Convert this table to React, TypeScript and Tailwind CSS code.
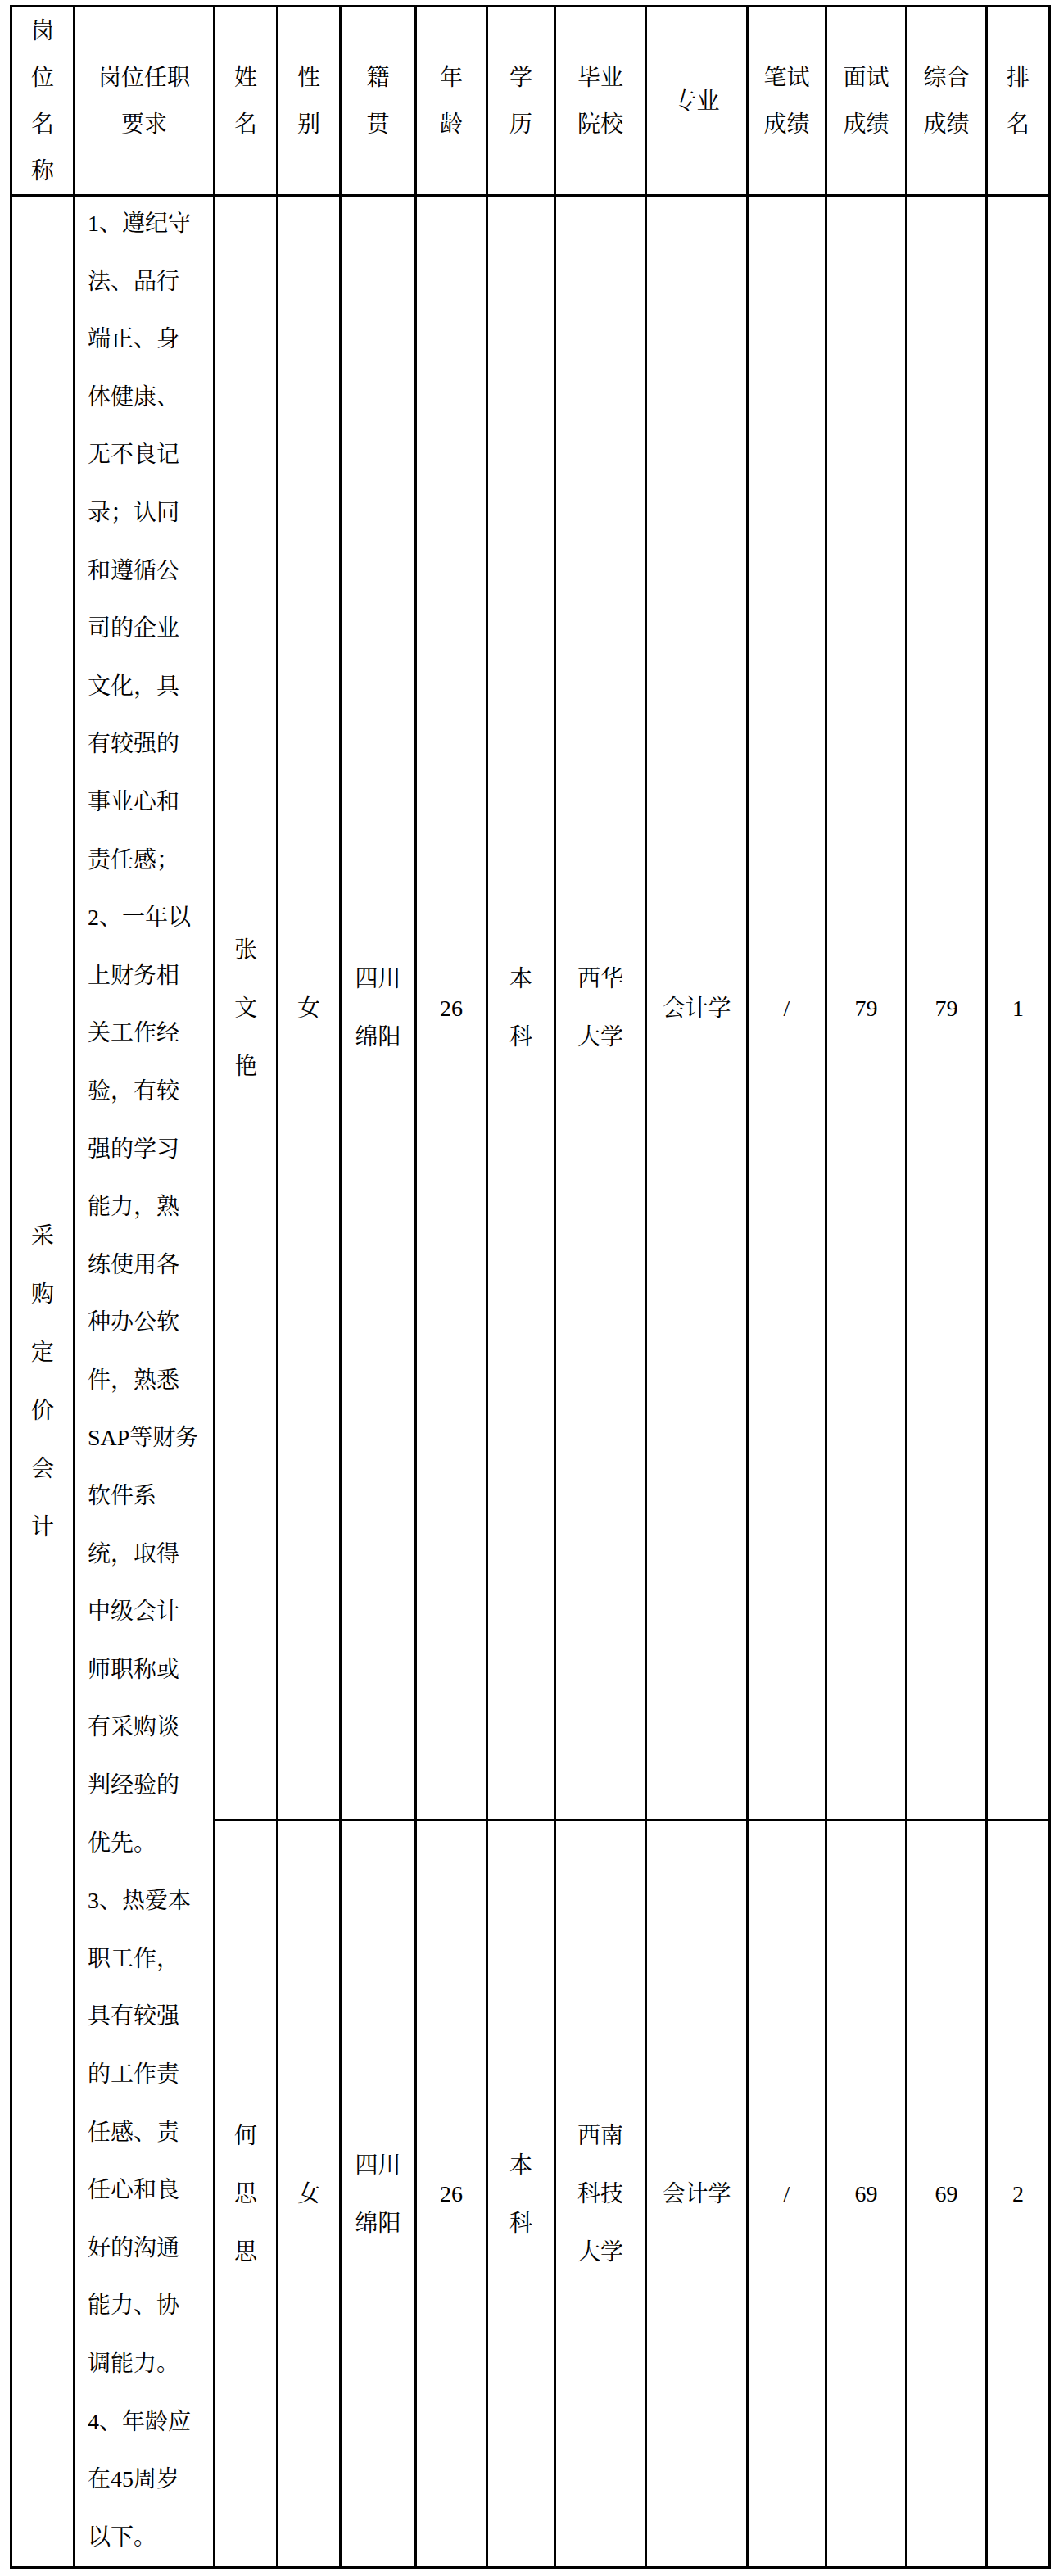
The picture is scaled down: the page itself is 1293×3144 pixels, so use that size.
import React from "react";

const headers: string[][] = [
  ["岗", "位", "名", "称"],
  ["岗位任职", "要求"],
  ["姓", "名"],
  ["性", "别"],
  ["籍", "贯"],
  ["年", "龄"],
  ["学", "历"],
  ["毕业", "院校"],
  ["专业"],
  ["笔试", "成绩"],
  ["面试", "成绩"],
  ["综合", "成绩"],
  ["排", "名"],
];

const requirements = [
  "1、遵纪守",
  "法、品行",
  "端正、身",
  "体健康、",
  "无不良记",
  "录；认同",
  "和遵循公",
  "司的企业",
  "文化，具",
  "有较强的",
  "事业心和",
  "责任感；",
  "2、一年以",
  "上财务相",
  "关工作经",
  "验，有较",
  "强的学习",
  "能力，熟",
  "练使用各",
  "种办公软",
  "件，熟悉",
  "SAP等财务",
  "软件系",
  "统，取得",
  "中级会计",
  "师职称或",
  "有采购谈",
  "判经验的",
  "优先。",
  "3、热爱本",
  "职工作，",
  "具有较强",
  "的工作责",
  "任感、责",
  "任心和良",
  "好的沟通",
  "能力、协",
  "调能力。",
  "4、年龄应",
  "在45周岁",
  "以下。",
];

const people: string[][][] = [
  [["张", "文", "艳"], ["女"], ["四川", "绵阳"], ["26"], ["本", "科"], ["西华", "大学"], ["会计学"], ["/"], ["79"], ["79"], ["1"]],
  [["何", "思", "思"], ["女"], ["四川", "绵阳"], ["26"], ["本", "科"], ["西南", "科技", "大学"], ["会计学"], ["/"], ["69"], ["69"], ["2"]],
];

const Lines = ({ lines, head }: { lines: string[]; head?: boolean }) => (
  <div className="flex h-full flex-col items-center justify-center bg-white text-center">
    {lines.map((l, i) => (
      <div key={i} className={head ? "whitespace-nowrap leading-[57px]" : "whitespace-nowrap leading-[71px]"}>
        {l}
      </div>
    ))}
  </div>
);

export default function App() {
  return (
    <div className="min-h-[3144px] bg-white pt-[6px] pl-[12px] font-['Liberation_Serif','Noto_Serif_CJK_SC','Noto_Sans_CJK_SC',serif] text-[28px] text-black">
      <div className="grid w-[1271px] grid-cols-[74px_168px_74px_74px_89px_84px_80px_108px_121px_93px_95px_95px_74px] grid-rows-[228px_1980px_909px] gap-[3px] bg-black p-[3px]">
        {headers.map((h, i) => (
          <Lines key={i} lines={h} head />
        ))}

        <div className="row-span-2">
          <Lines lines={["采", "购", "定", "价", "会", "计"]} />
        </div>
        <div className="row-span-2 bg-white pl-[15px]">
          <div className="-mt-[2px]">
            {requirements.map((l, i) => (
              <div key={i} className="whitespace-nowrap leading-[70.6px]">
                {l}
              </div>
            ))}
          </div>
        </div>

        {people.map((p) =>
          p.map((cell, j) => <Lines key={p[0].join("") + j} lines={cell} />)
        )}
      </div>
    </div>
  );
}
